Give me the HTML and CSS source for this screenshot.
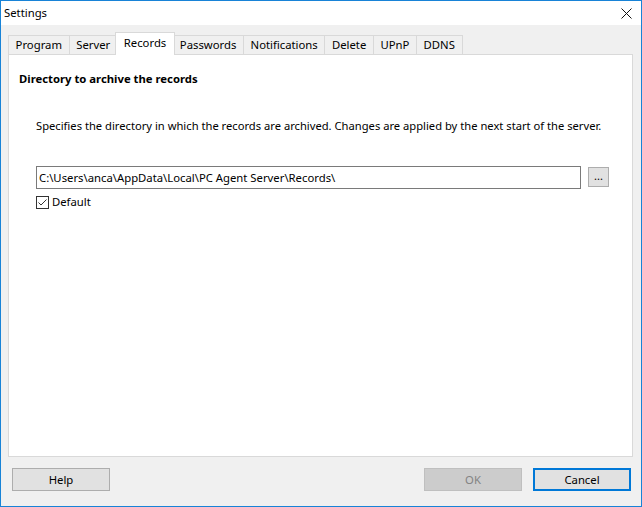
FILE: index.html
```html
<!DOCTYPE html>
<html lang="en">
<head>
    <meta charset="UTF-8">
    <title>Settings</title>
    <link rel="stylesheet" href="styles.css">
</head>
<body>
    <div class="window">
        <div class="titlebar">
            <span class="title">Settings</span>
            <svg class="close" width="11" height="11" viewBox="0 0 11 11">
                <path d="M0.5 0.5 L10.5 10.5 M10.5 0.5 L0.5 10.5" stroke="#111" stroke-width="1"/>
            </svg>
        </div>
        <div class="content">
            <div class="tabs">
                <div class="tab">Program</div>
                <div class="tab">Server</div>
                <div class="tab active">Records</div>
                <div class="tab">Passwords</div>
                <div class="tab">Notifications</div>
                <div class="tab">Delete</div>
                <div class="tab">UPnP</div>
                <div class="tab">DDNS</div>
            </div>
            <div class="panel">
                <h1 class="heading">Directory to archive the records</h1>
                <div class="section">
                    <p class="desc">Specifies the directory in which the records are archived. Changes are applied by the next start of the server.</p>
                    <div class="pathrow">
                        <div class="path">C:\Users\anca\AppData\Local\PC Agent Server\Records\</div>
                        <button class="browse">...</button>
                    </div>
                    <label class="check">
                        <span class="box">
                            <svg width="11" height="11" viewBox="0 0 11 11">
                                <path d="M1.5 5.5 L4 8 L9.5 2.5" fill="none" stroke="#333" stroke-width="1"/>
                            </svg>
                        </span>
                        Default
                    </label>
                </div>
            </div>
            <div class="footer">
                <button class="btn">Help</button>
                <div class="spacer"></div>
                <button class="btn disabled">OK</button>
                <button class="btn default">Cancel</button>
            </div>
        </div>
    </div>
</body>
</html>
```

FILE: styles.css
```css
* {
    box-sizing: border-box;
}
body {
    margin: 0;
    font-family: "Noto Sans", "Open Sans", sans-serif;
    font-size: 11.3px;
    color: #000;
}
.window {
    width: 642px;
    height: 507px;
    border: 1px solid #1883d7;
    display: flex;
    flex-direction: column;
    background-color: #f0f0f0;
}
.titlebar {
    height: 24px;
    background-color: #fff;
    display: flex;
    align-items: center;
    padding: 0 9px 1px 3px;
}
.title {
    flex: 1;
}
.close {
    margin-top: 1px;
}
.content {
    flex: 1;
    display: flex;
    flex-direction: column;
    padding: 7px 8px 0 7px;
}
.tabs {
    display: flex;
    height: 22px;
    align-items: flex-end;
    position: relative;
    z-index: 1;
}
.tab {
    height: 19px;
    padding: 0 6.6px;
    border: 1px solid #d9d9d9;
    border-bottom: none;
    border-right: none;
    line-height: 18px;
    background-color: #f0f0f0;
}
.tab:nth-child(8) {
    border-right: 1px solid #d9d9d9;
}
.tab.active {
    height: 23px;
    margin: 0 -2px -1px -2px;
    padding: 0 8px;
    background-color: #fff;
    border-right: 1px solid #d9d9d9;
    line-height: 19px;
    position: relative;
}
.tab.active + .tab {
    border-left: none;
}
.panel {
    height: 403px;
    background-color: #fff;
    border: 1px solid #d9d9d9;
    padding: 16px 10px 0 10px;
}
.heading {
    margin: 0;
    font-size: 11.3px;
    font-weight: bold;
    line-height: 16px;
}
.section {
    padding-left: 17px;
}
.desc {
    margin: 31px 0 0 0;
    line-height: 16px;
    font-size: 11.2px;
}
.pathrow {
    display: flex;
    align-items: flex-start;
    margin-top: 32px;
}
.path {
    width: 545px;
    height: 23px;
    border: 1px solid #7a7a7a;
    padding: 0 2px;
    line-height: 21px;
    white-space: nowrap;
    overflow: hidden;
}
.browse {
    width: 21px;
    height: 20px;
    margin: 1px 0 0 7px;
    padding: 0 0 2px 0;
    border: 1px solid #adadad;
    background-color: #e1e1e1;
    font-family: inherit;
    font-size: 11px;
    line-height: 10px;
}
.check {
    display: flex;
    align-items: center;
    gap: 3px;
    margin-top: 5px;
    line-height: 16px;
}
.box {
    width: 13px;
    height: 13px;
    border: 1px solid #333;
    display: flex;
}
.footer {
    display: flex;
    padding: 11px 2px 0 4px;
}
.spacer {
    flex: 1;
}
.btn {
    width: 98px;
    height: 23px;
    border: 1px solid #adadad;
    background-color: #e1e1e1;
    font-family: inherit;
    font-size: 11.3px;
    color: #000;
    padding: 0;
}
.btn.disabled {
    background-color: #cccccc;
    border-color: #bfbfbf;
    color: #838383;
    margin-right: 11px;
}
.btn.default {
    border: 2px solid #0078d7;
}
```
